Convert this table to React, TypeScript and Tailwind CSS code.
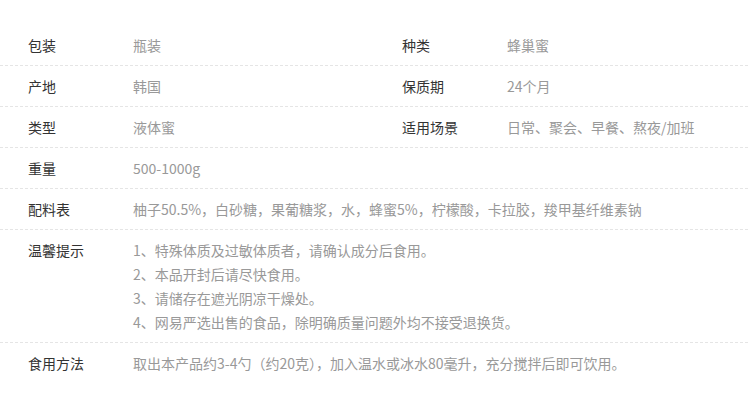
import React from "react";

const font = { fontFamily: '"Microsoft YaHei", "Noto Sans CJK SC", "Noto Sans", sans-serif' };

function Cell({ label, children }: { label: string; children: React.ReactNode }) {
  return (
    <div className="flex w-[374px] pl-[28px]">
      <div className="w-[105px] shrink-0 text-[#333]">{label}</div>
      <div className="text-[#999]">{children}</div>
    </div>
  );
}

function Row({ children, last }: { children: React.ReactNode; last?: boolean }) {
  return (
    <div
      className={
        "flex py-2 text-[14px] leading-[24px] " +
        (last ? "" : "border-b border-dashed border-[#e5e5e5]")
      }
    >
      {children}
    </div>
  );
}

function Wide({ label, children }: { label: string; children: React.ReactNode }) {
  return (
    <div className="flex pl-[28px]">
      <div className="w-[105px] shrink-0 text-[#333]">{label}</div>
      <div className="text-[#999]">{children}</div>
    </div>
  );
}

export default function App() {
  return (
    <div className="w-[750px] h-[397px] bg-white pt-[25px]" style={font}>
      <div className="w-[748px]">
        <Row>
          <Cell label="包装">瓶装</Cell>
          <Cell label="种类">蜂巢蜜</Cell>
        </Row>
        <Row>
          <Cell label="产地">韩国</Cell>
          <Cell label="保质期">24个月</Cell>
        </Row>
        <Row>
          <Cell label="类型">液体蜜</Cell>
          <Cell label="适用场景">日常、聚会、早餐、熬夜/加班</Cell>
        </Row>
        <Row>
          <Wide label="重量">500-1000g</Wide>
        </Row>
        <Row>
          <Wide label="配料表">柚子50.5%，白砂糖，果葡糖浆，水，蜂蜜5%，柠檬酸，卡拉胶，羧甲基纤维素钠</Wide>
        </Row>
        <Row>
          <Wide label="温馨提示">
            <p>1、特殊体质及过敏体质者，请确认成分后食用。</p>
            <p>2、本品开封后请尽快食用。</p>
            <p>3、请储存在遮光阴凉干燥处。</p>
            <p>4、网易严选出售的食品，除明确质量问题外均不接受退换货。</p>
          </Wide>
        </Row>
        <Row last>
          <Wide label="食用方法">取出本产品约3-4勺（约20克），加入温水或冰水80毫升，充分搅拌后即可饮用。</Wide>
        </Row>
      </div>
    </div>
  );
}
